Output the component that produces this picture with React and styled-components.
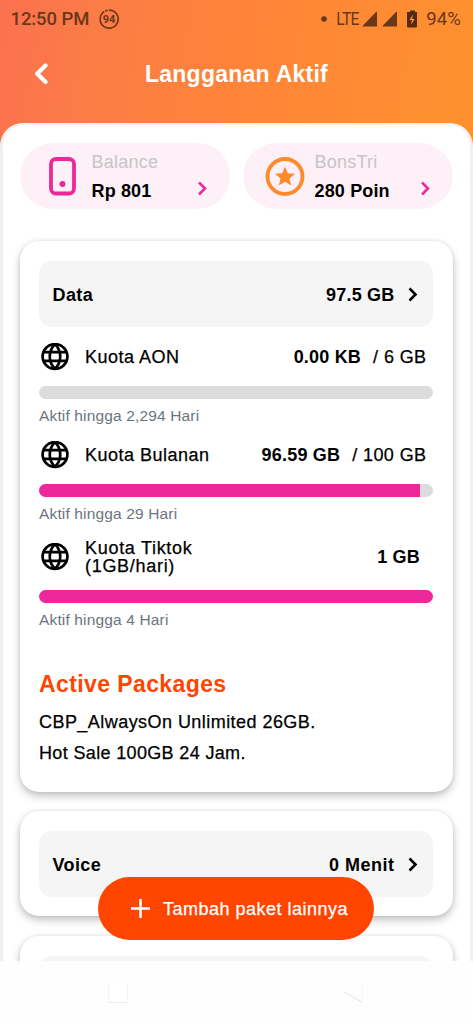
import React from 'react'
import styled, { createGlobalStyle } from 'styled-components'

const GlobalStyle = createGlobalStyle`
  * {
    box-sizing: border-box;
  }

  body {
    margin: 0;
    background: #fefefe;
    color: #000;
    font-family: 'Liberation Sans', Arial, sans-serif;
  }

  svg {
    display: block;
    flex-shrink: 0;
  }
`

const Screen = styled.div`
  position: relative;
  display: flex;
  flex-direction: column;
  width: 473px;
  height: 1024px;
  overflow: hidden;
`

const Viewport = styled.div`
  height: 961px;
  overflow: hidden;
  background: linear-gradient(100deg, #fb7150 0, #fc7c46 100px, #ff8438 250px, #ff9030 470px) no-repeat;
  background-size: 100% 170px;
`

const StatusBar = styled.div`
  display: flex;
  justify-content: space-between;
  align-items: center;
  height: 37px;
  padding: 0 12px 0 10.5px;
  color: #693719;
  font-family: Roboto, sans-serif;
  font-size: 18.5px;
`

const StatusGroup = styled.div`
  display: flex;
  align-items: center;
`

const Clock = styled.span`
  letter-spacing: -0.1px;
  font-weight: 500;
  margin-right: 9.5px;
`

const Network = styled.span`
  font-size: 17.5px;
  letter-spacing: -0.8px;
  transform: scaleX(0.9);
  margin: 0 2px 0 8px;
`

const Percent = styled.span`
  letter-spacing: 0.1px;
  margin-left: 4px;
`

const TitleBar = styled.header`
  display: grid;
  grid-template-columns: 82px 1fr 82px;
  align-items: center;
  height: 86px;
  padding-bottom: 13px;
  color: #fff;
`

const BackIcon = styled.svg`
  margin-left: 33px;
`

const Title = styled.h1`
  margin: 1px 0 0;
  text-align: center;
  font-size: 23px;
  line-height: 28px;
  letter-spacing: 0.25px;
`

const Sheet = styled.main`
  height: 860px;
  padding: 18px 17.5px 0 16.5px;
  border: 3px solid #f0f0f0;
  border-top-width: 2px;
  border-radius: 23px 23px 0 0;
  background: #fff;
`

const Pills = styled.div`
  display: flex;
  gap: 13px;
  margin-bottom: 32px;
`

const Pill = styled.div`
  display: flex;
  flex-shrink: 0;
  align-items: center;
  width: 210px;
  height: 66px;
  padding: 0 22.5px 0 ${props => props.inset}px;
  border-radius: 33px;
  background: #fdf1f7;
`

const PillText = styled.div`
  flex: 1;
  margin-left: ${props => props.gap}px;
  font-size: 18px;
`

const PillLabel = styled.div`
  color: #c6c4c6;
  line-height: 24px;
  letter-spacing: 0.25px;
  margin-bottom: 5px;
`

const PillValue = styled.div`
  font-weight: bold;
  line-height: 24px;
  letter-spacing: 0.15px;
  white-space: nowrap;
`

const PillArrow = styled.svg`
  margin-top: 24px;
`

const Card = styled.section`
  height: ${props => props.height}px;
  margin-bottom: 19.5px;
  padding: 20px 19.5px;
  border-radius: 19px;
  background: #fff;
  box-shadow: 0 4px 8px rgba(0, 0, 0, 0.24), 0 0 4px rgba(0, 0, 0, 0.08);
`

const CardHeader = styled.div`
  display: flex;
  align-items: center;
  height: 66px;
  padding: 2px 14.5px 0 13.5px;
  border-radius: 13px;
  background: #f5f5f5;
  font-size: 18px;
  font-weight: bold;
  letter-spacing: ${props => props.spacing || 0.2}px;
`

const CardTitle = styled.span`
  flex: 1;
  letter-spacing: 0.4px;
`

const CardArrow = styled.svg`
  margin: -1px 0 0 13px;
`

const QuotaRow = styled.div`
  display: flex;
  align-items: center;
  height: ${props => (props.tall ? 67 : 59)}px;
  padding: 0 ${props => (props.tall ? 13 : 6.5)}px 0 2px;
  font-size: 18px;
`

const QuotaName = styled.div`
  flex: 1;
  margin-left: 16px;
  line-height: 18px;
  letter-spacing: ${props => props.spacing}px;
  white-space: pre-line;
  -webkit-text-stroke: 0.25px #000;
`

const Remaining = styled.strong`
  margin: 1px 12px 0 0;
  letter-spacing: 0.2px;

  &:last-child {
    margin-right: 0;
  }
`

const Total = styled.span`
  margin-top: 1px;
  letter-spacing: 0.4px;
  -webkit-text-stroke: 0.25px #000;
`

const Track = styled.div`
  height: 13px;
  border-radius: 7px;
  overflow: hidden;
  background: #dcdcdc;
`

const Fill = styled.div`
  height: 100%;
  background: #ee289b;
`

const Expiry = styled.div`
  height: 26px;
  padding-top: 7px;
  color: #6c757d;
  font-size: 15.5px;
  line-height: 20px;
  letter-spacing: 0.15px;
`

const PackagesTitle = styled.h2`
  margin: 41px 0 9px;
  color: #ff4500;
  font-size: 23px;
  line-height: 28px;
  letter-spacing: 0.4px;
`

const Package = styled.div`
  font-size: 18px;
  line-height: 31px;
  letter-spacing: ${props => props.spacing}px;
  -webkit-text-stroke: 0.25px #000;
`

const AddButton = styled.button`
  position: absolute;
  left: 98px;
  top: 877px;
  display: flex;
  align-items: center;
  gap: 13px;
  width: 276px;
  height: 63px;
  padding: 1px 0 0 33px;
  border: 0;
  border-radius: 32px;
  background: #ff4500;
  color: #fff;
  font-family: inherit;
  font-size: 18px;
  letter-spacing: 0.5px;
  white-space: nowrap;
  -webkit-text-stroke: 0.25px #fff;
`

const PlusIcon = styled.svg`
  margin-top: -2px;
`

const NavBar = styled.nav`
  display: flex;
  align-items: center;
  gap: 214px;
  height: 63px;
  padding-left: 107px;
  background: #fefefe;
`

const quotas = [
  { name: 'Kuota AON', left: '0.00 KB', total: '/ 6 GB', percent: 0, expiry: 'Aktif hingga 2,294 Hari' },
  { name: 'Kuota Bulanan', left: '96.59 GB', total: '/ 100 GB', percent: 96.7, expiry: 'Aktif hingga 29 Hari' },
  { name: 'Kuota Tiktok\n(1GB/hari)', left: '1 GB', percent: 100, expiry: 'Aktif hingga 4 Hari', tall: true }
]

const Globe = () => (
  <svg width="28" height="28" viewBox="0 0 28 28" fill="none" stroke="#000" strokeWidth="2.7">
    <circle cx="14" cy="13.5" r="12.4" />
    <path d="M14 1C7 8.3 7 18.7 14 26M14 1C21 8.3 21 18.7 14 26M2.4 9.1H25.6M2.4 17.9H25.6" />
  </svg>
)

const PinkArrow = () => (
  <PillArrow width="10" height="15" viewBox="0 0 10 15" fill="none" stroke="#ee289b" strokeWidth="2.5">
    <path d="M2 1.5L8 7.5L2 13.5" />
  </PillArrow>
)

const Signal = () => (
  <svg width="20" height="16" viewBox="0 0 20 16">
    <path d="M15 1V15.5H1Q0 15.5 .7 14.7L14 1Q15 .1 15 1Z" fill="#693719" />
  </svg>
)

const Header = ({ title, value, spacing }) => (
  <CardHeader spacing={spacing}>
    <CardTitle>{title}</CardTitle>
    <span>{value}</span>
    <CardArrow width="11" height="15" viewBox="0 0 11 15" fill="none" stroke="#000" strokeWidth="2.6">
      <path d="M1.5 1.5L7.5 7.5L1.5 13.5" />
    </CardArrow>
  </CardHeader>
)

export default class App extends React.Component {
  render () {
    return (
      <Screen>
        <GlobalStyle />
        <Viewport>
          <StatusBar>
            <StatusGroup>
              <Clock>12:50 PM</Clock>
              <svg width="20" height="20" viewBox="0 0 20 20">
                <path d="M10 1.1A9 9 0 1 1 5.2 2.6M6.2 2L8.8 1.2" fill="none" stroke="#693719" strokeWidth="1.6" />
                <text x="10" y="13.8" textAnchor="middle" fill="#693719" fontSize="11" fontWeight="700" fontFamily="Roboto">94</text>
              </svg>
            </StatusGroup>
            <StatusGroup>
              <svg width="6" height="6" viewBox="0 0 6 6">
                <circle cx="3" cy="3" r="2.8" fill="#693719" />
              </svg>
              <Network>LTE</Network>
              <Signal />
              <Signal />
              <svg width="20" height="18" viewBox="0 0 20 18">
                <path d="M8 .5h5v1.5h2v14.5q0 1-1 1H6q-1 0-1-1V2h3z" fill="#562b12" />
                <path d="M11 4.5L7.5 10H10L9 15L12.5 9H10z" fill="#ff9b52" />
              </svg>
              <Percent>94%</Percent>
            </StatusGroup>
          </StatusBar>
          <TitleBar>
            <BackIcon width="16" height="22" viewBox="0 0 16 22" fill="none" stroke="#fff" strokeWidth="4.2" strokeLinecap="round" strokeLinejoin="round">
              <path d="M12.5 2.6L4.2 10.8L12.5 19" />
            </BackIcon>
            <Title>Langganan Aktif</Title>
          </TitleBar>
          <Sheet>
            <Pills>
              <Pill inset={29}>
                <svg width="28" height="39" viewBox="0 0 28 39">
                  <rect x="2" y="2" width="23" height="34.5" rx="5" fill="none" stroke="#ee289b" strokeWidth="3.8" />
                  <circle cx="13.5" cy="27" r="3" fill="#ee289b" />
                </svg>
                <PillText gap={15}>
                  <PillLabel>Balance</PillLabel>
                  <PillValue>Rp 801</PillValue>
                </PillText>
                <PinkArrow />
              </Pill>
              <Pill inset={22.5}>
                <svg width="40" height="39" viewBox="0 0 40 39">
                  <circle cx="20" cy="19.5" r="17.5" fill="none" stroke="#ff8a2c" strokeWidth="3.8" />
                  <path d="M20 9.5L22.8 16.2L30 16.8L24.5 21.5L26.2 28.5L20 24.8L13.8 28.5L15.5 21.5L10 16.8L17.2 16.2Z" fill="#ff8a2c" />
                </svg>
                <PillText gap={9.5}>
                  <PillLabel>BonsTri</PillLabel>
                  <PillValue>280 Poin</PillValue>
                </PillText>
                <PinkArrow />
              </Pill>
            </Pills>
            <Card height={550.5}>
              <Header title="Data" value="97.5 GB" />
              {quotas.map(quota => (
                <div key={quota.name}>
                  <QuotaRow tall={quota.tall ? 1 : undefined}>
                    <Globe />
                    <QuotaName spacing={quota.tall ? 0.7 : 0.5}>{quota.name}</QuotaName>
                    <Remaining>{quota.left}</Remaining>
                    {quota.total && <Total>{quota.total}</Total>}
                  </QuotaRow>
                  <Track>
                    <Fill style={{ width: `${quota.percent}%` }} />
                  </Track>
                  <Expiry>{quota.expiry}</Expiry>
                </div>
              ))}
              <PackagesTitle>Active Packages</PackagesTitle>
              <Package spacing={0.45}>CBP_AlwaysOn Unlimited 26GB.</Package>
              <Package spacing={0.35}>Hot Sale 100GB 24 Jam.</Package>
            </Card>
            <Card height={105}>
              <Header title="Voice" value="0 Menit" spacing={0.5} />
            </Card>
            <Card height={105}>
              <Header />
            </Card>
          </Sheet>
        </Viewport>
        <NavBar>
          <svg width="22" height="22" viewBox="0 0 22 22">
            <path d="M1.5 2V19.5Q1.5 20.5 3 20.5H19Q20.5 20.5 20.5 19.5V2" fill="#fff" stroke="#f5f5f5" strokeWidth="1.1" />
            <path d="M2 20.5H20" stroke="#ebebeb" />
          </svg>
          <svg width="22" height="22" viewBox="0 0 22 22" fill="none">
            <path d="M19.5 1V20" stroke="#f7f7f7" />
            <path d="M19.5 20.5L1 10" stroke="#e8e8e8" strokeWidth="1.3" />
          </svg>
        </NavBar>
        <AddButton>
          <PlusIcon width="19" height="19" viewBox="0 0 19 19" fill="none" stroke="#fff" strokeWidth="2.5">
            <path d="M9.5 0V19M0 9.5H19" />
          </PlusIcon>
          Tambah paket lainnya
        </AddButton>
      </Screen>
    )
  }
}
